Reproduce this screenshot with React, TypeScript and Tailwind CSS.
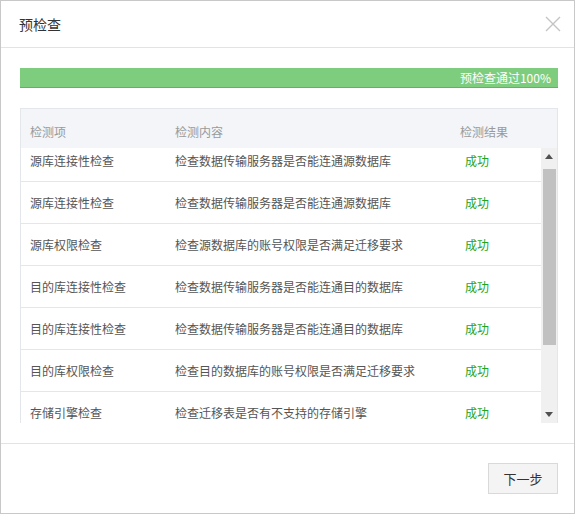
import React from 'react'

const ROWS = [
  { name: '源库连接性检查', desc: '检查数据传输服务器是否能连通源数据库' },
  { name: '源库连接性检查', desc: '检查数据传输服务器是否能连通源数据库' },
  { name: '源库权限检查', desc: '检查源数据库的账号权限是否满足迁移要求' },
  { name: '目的库连接性检查', desc: '检查数据传输服务器是否能连通目的数据库' },
  { name: '目的库连接性检查', desc: '检查数据传输服务器是否能连通目的数据库' },
  { name: '目的库权限检查', desc: '检查目的数据库的账号权限是否满足迁移要求' },
  { name: '存储引擎检查', desc: '检查迁移表是否有不支持的存储引擎' },
]

function Scrollbar() {
  return (
    <div className="w-[16px] shrink-0 bg-[#f0f0f0] flex flex-col">
      <div className="h-[17px] flex items-center justify-center">
        <svg width="8" height="5" viewBox="0 0 8 5"><path d="M0 5 L4 0 L8 5 Z" fill="#505050" /></svg>
      </div>
      <div className="flex-1 flex flex-col pt-[4px] pl-[2px] pr-[1px]">
        <div className="h-[176px] bg-[#c1c1c1]" />
      </div>
      <div className="h-[17px] flex items-center justify-center">
        <svg width="8" height="5" viewBox="0 0 8 5"><path d="M0 0 L8 0 L4 5 Z" fill="#505050" /></svg>
      </div>
    </div>
  )
}

export default function App() {
  return (
    <div
      className="w-[575px] h-[514px] border border-[#c8c8c8] bg-white flex flex-col"
      style={{ fontFamily: '"Noto Sans CJK SC", "Liberation Sans", sans-serif' }}
    >
      <div className="h-[47px] shrink-0 border-b border-[#e3e3e3] flex items-center justify-between pl-[18px] pr-[13px]">
        <div className="text-[14px] text-[#333]">预检查</div>
        <svg width="16" height="16" viewBox="0 0 16 16" className="mt-[-1px]">
          <path d="M1 1 L15 15 M15 1 L1 15" stroke="#c4c4c4" strokeWidth="1.4" />
        </svg>
      </div>

      <div className="flex-1 flex flex-col pl-[19px] pr-[16px] pt-[20px]">
        <div className="h-[20px] bg-[#7ecd7e] border-b border-[#62b262] flex items-center justify-end pr-[7px] text-[12px] text-white leading-none">
          预检查通过100%
        </div>

        <div className="mt-[20px] border-t border-l border-r border-[#e3e7ec] flex flex-col text-[12px]">
          <div className="h-[39px] bg-[#f3f5f8] flex items-end pb-[8px] text-[#9a9a9a] leading-[16px]">
            <div className="w-[145px] pl-[9px]">检测项</div>
            <div className="w-[294px] pl-[9px]">检测内容</div>
            <div>检测结果</div>
          </div>
          <div className="h-[275px] flex">
            <div className="flex-1 overflow-hidden">
              <div className="-mt-[8px]">
                {ROWS.map((r, i) => (
                  <div key={i} className="h-[42px] border-b border-[#e3e7ec] flex items-center text-[#555]">
                    <div className="w-[145px] pl-[9px]">{r.name}</div>
                    <div className="w-[290px] pl-[9px]">{r.desc}</div>
                    <div className="pl-[9px] text-[#1ea51e]">成功</div>
                  </div>
                ))}
              </div>
            </div>
            <Scrollbar />
          </div>
        </div>
      </div>

      <div className="h-[70px] shrink-0 border-t border-[#e3e3e3] flex items-center justify-end pr-[16px]">
        <button className="w-[70px] h-[31px] bg-[#f4f4f4] border border-[#d9d9d9] text-[13px] text-[#333]">
          下一步
        </button>
      </div>
    </div>
  )
}
